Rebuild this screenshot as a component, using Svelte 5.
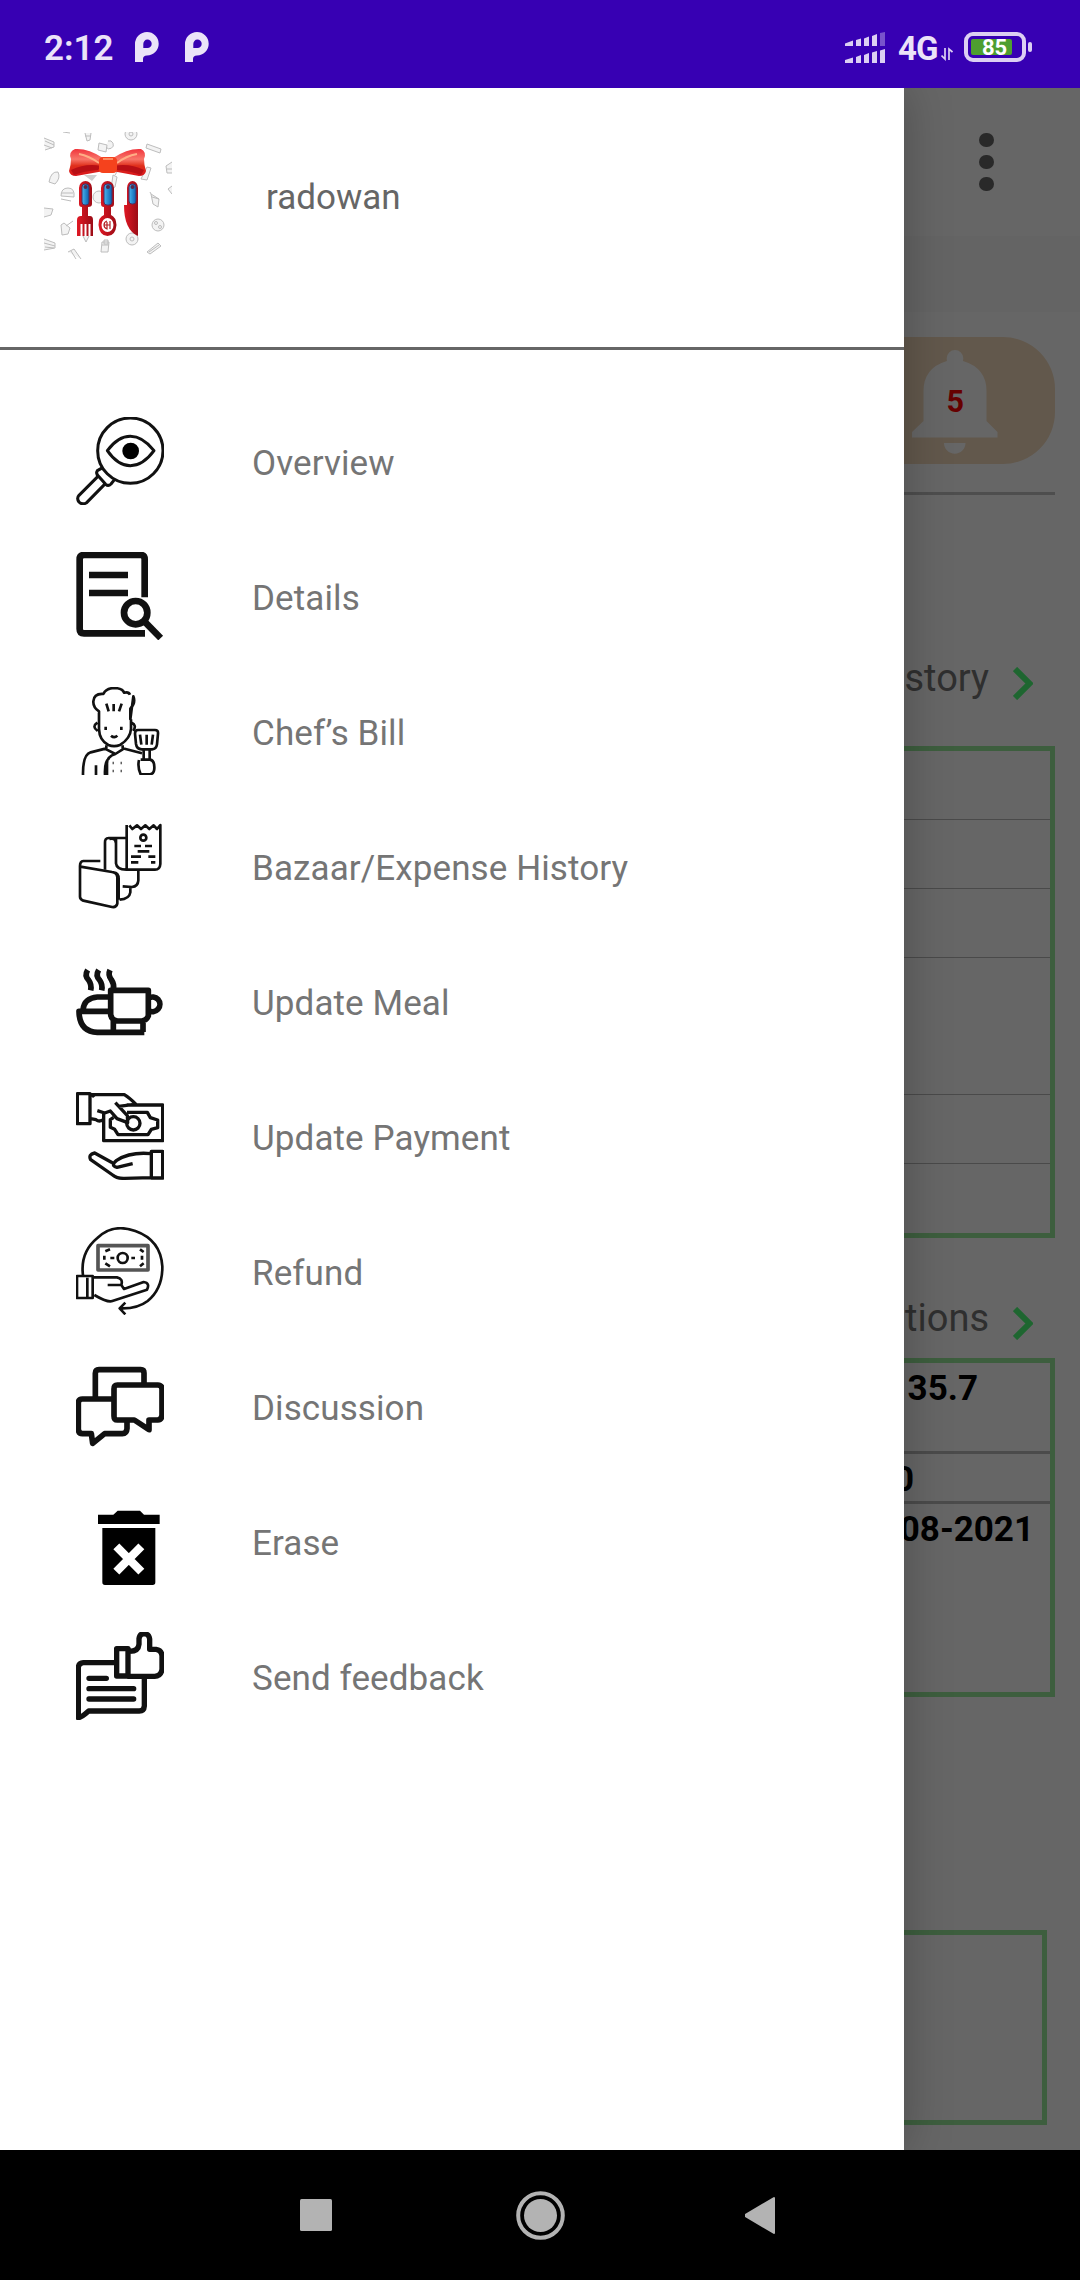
<script>
  const items = [
    { id: 'overview', label: 'Overview', top: 51 },
    { id: 'details', label: 'Details', top: 456 },
    { id: 'chef', label: 'Chef’s Bill', top: 51 },
    { id: 'bazaar', label: 'Bazaar/Expense History', top: 456 },
    { id: 'meal', label: 'Update Meal', top: 51 },
    { id: 'payment', label: 'Update Payment', top: 456 },
    { id: 'refund', label: 'Refund', top: 51 },
    { id: 'discussion', label: 'Discussion', top: 456 },
    { id: 'erase', label: 'Erase', top: 51 },
    { id: 'feedback', label: 'Send feedback', top: 456 }
  ];
</script>

<div class="screen">
  <header class="status">
    <span class="time">2:12</span>
    {#each [0, 1] as n (n)}
      <svg class="pee" viewBox="0 0 24 30"><path fill-rule="evenodd" d="M0 30V12A12 12 0 0 1 12 0A11.700 11.700 0 0 1 12 23.400Q8 23.500 8 27V30zM8.300 16V12a4.200 4.200 0 1 1 4.200 4z" fill="#ebe3f8" /></svg>
    {/each}
    <svg class="signal" viewBox="0 0 40 32">
      <g fill="#dccff3">
        <path d="M0 11.500L8 8.500V14H0zM11 8L16 6.500V14H11zM19 6.500L24 4.500V14H19zM27 4L32 2V14H27z" />
        <path d="M0 28L8 25.500V31H0zM11 25L16 23V31H11zM19 23L24 21V31H19zM27 20.500L32 19V31H27zM35 18.500L40 17V31H35z" />
        <path d="M35 1L40 0V14H35z" opacity=".4" />
      </g>
    </svg>
    <span class="net">4G</span>
    <svg class="updown" viewBox="0 0 12 14"><path d="M4 1V12L.5 8.500M8 13V2L11.500 5" fill="none" stroke="#dccff3" stroke-width="1.700" /></svg>
    <div class="battery"><div class="level"></div><b>85</b></div>
    <i class="nub"></i>
  </header>

  <main>
    <div class="page">
      <div class="toolbar"><i></i><i></i><i></i></div>
      <div class="band"></div>
      <div class="pill">
        <svg viewBox="0 0 86 104">
          <path d="M34.700 8.300A8.300 8.300 0 0 1 51.300 8.300L51 11Q74.500 18 74.500 41V71L85.500 82V87.500H0V82L11.500 71V41Q11.500 18 34.900 11zM32 93H53.500A10.700 10.700 0 0 1 32 93z" fill="#fff" />
        </svg>
        <b>5</b>
      </div>
      <div class="rule"></div>
      <div class="heading first"><span>story</span><svg viewBox="0 0 20 33"><path d="M2 2L16.500 16.500L2 31" /></svg></div>
      <div class="table">
        <p></p><p></p><p></p><p class="tall"></p><p></p><p class="last"></p>
      </div>
      <div class="heading second"><span>tions</span><svg viewBox="0 0 20 33"><path d="M2 2L16.500 16.500L2 31" /></svg></div>
      <div class="stats">
        <b class="a">35.7</b>
        <b class="b">0</b>
        <b class="c">08-2021</b>
      </div>
      <div class="box"></div>
    </div>
    <div class="scrim"></div>

    <aside class="drawer">
      <div class="profile">
        <svg class="logo" viewBox="0 0 128 127">
          <defs>
            <linearGradient id="bow" x1="0" y1="0" x2="0" y2="1"><stop offset="0" stop-color="#f0343c" /><stop offset=".38" stop-color="#f8766a" /><stop offset=".62" stop-color="#e0301c" /><stop offset="1" stop-color="#d8141c" /></linearGradient>
            <linearGradient id="steel" x1="0" x2="1"><stop offset="0" stop-color="#e01824" /><stop offset="1" stop-color="#9c0c16" /></linearGradient>
            <linearGradient id="grip" x1="0" x2="1"><stop offset="0" stop-color="#49b4ee" /><stop offset="1" stop-color="#0b5fae" /></linearGradient>
          </defs>
          <g fill="#f3f3f3" stroke="#bdbdbd" stroke-width="1">
            <path d="M0 6l10 4v5l-9 3M1 9l9 4M0 13l8 3M19 0l7 1M41 1l2 8 3-1 1-7M41 4h6M55 11l8 2-1 7-8-2zM64 9a4 4 0 1 1-2 6M103 12l14 5-1 4-14-5zM5 50q2-11 9-10 3 6-3 12zM17 64q0-8 7-8 7 0 6 9zM17 61h12M17 67l10 2M107 62l2 10 5 3 1-8zM108 65l7 2M107 62l-1-2M0 76l9 1-2 6-7 2M17 93l3-2 6 5-2 6-6 1zM22 94l7-5M0 107l11 4v5l-11 2M0 111l11 3M1 115l9 1M24 120l6-3 7 10M27 119l5 8M58 110h7l-1 10h-7zM58 113h7M60 108h4v4h-4zM103 120l11-9 3 3-11 8zM105 120l10-7M39 104l3 6 3-6M128 30l-6 4 1 7h5M123 37h5M128 54l-4 3 4 5M69 43l4 2-2 10-4 2zM71 43l2-3M97 47l6 1 4-12-4-1z" />
            <circle cx="87" cy="2" r="6" /><circle cx="87" cy="2" r="2" /><circle cx="114" cy="93" r="6" /><circle cx="112" cy="91" r="1.500" /><circle cx="116" cy="95" r="1.500" /><circle cx="88" cy="107" r="6" /><circle cx="88" cy="107" r="2" /><circle cx="55" cy="65" r="6" />
          </g>
          <path d="M40 43h13l-5 6z" fill="#cfcfcf" />
          <path d="M59 26Q44 16 31 17Q24 20 27 27Q27 33 25 39Q26 44 32 44L60 39zM69 26Q84 16 97 17Q103 20 100 27Q100 33 102 39Q101 44 95 44L68 39z" fill="url(#bow)" />
          <path d="M27 38Q42 31 57 34L54 38Q40 39 30 43zM100 38Q85 31 70 34L73 38Q87 39 97 43z" fill="#b80f15" />
          <path d="M35 22Q45 24 55 31M93 22Q82 24 73 31" fill="none" stroke="#ffae85" stroke-width="2" />
          <rect x="55" y="25" width="18" height="16" rx="4" fill="#f5421d" />
          <path d="M59 27h10" stroke="#ff8a60" stroke-width="2" />
          <g fill="url(#steel)">
            <path d="M35 56a6.500 7 0 0 1 13 0V72q0 3-4 3v9h2q3 0 3 4v16h-2.500V92h-2v12h-2V92h-2v12h-2V92h-2v12H33V88q0-4 4-4h1v-9q-3 0-3-3z" />
            <path d="M57 56a6.500 7 0 0 1 13 0V72q0 3-3 3v8q5 2 5.500 10-1 11-9 11t-9-11q0-8 5.500-10v-8q-3 0-3-3z" />
            <path d="M83 56a5.500 7 0 0 1 11 0V104Q80 98 80 73h3z" />
          </g>
          <g fill="url(#grip)" stroke="#493266" stroke-width="1"><rect x="38" y="52" width="7" height="21" rx="3" /><rect x="60" y="52" width="8" height="21" rx="3" /><rect x="85" y="52" width="7" height="20" rx="3" /></g>
          <g fill="#5a2848"><circle cx="41.500" cy="55" r="2" /><circle cx="64" cy="55" r="2" /><circle cx="88.500" cy="55" r="2" /></g>
          <ellipse cx="63.500" cy="93" rx="6" ry="7" fill="#fff" />
          <path d="M63 89q-3 1-3 4t3 4v-7M66 97v-8M60 93h6" fill="none" stroke="#b32024" stroke-width="1.200" />
        </svg>
        <span>radowan</span>
      </div>
      <nav>
        {#each items as item (item.id)}
          <div class="item">
            <svg viewBox="48 {item.top} 264 264" class="icon {item.id}">
              {#if item.id === 'overview'}
                <circle cx="211" cy="152" r="98" />
                <path d="M142 152Q174 109 211 109T282 152Q249 197 211 197T142 152z" /><circle class="fill" cx="212" cy="153" r="25" />
                <path d="M128 203L112 212Q106 222 117 230L137 253Q145 260 153 252L164 238M116 227L57 286Q49 295 57 306Q67 316 80 308L136 251" />
              {:else if item.id === 'details'}
                <path d="M254 592V478Q254 465 242 465H72Q59 465 59 478V687Q59 700 72 700H255" />
                <path d="M87 525H204M87 579H204" />
                <circle cx="227" cy="638" r="35" /><path d="M253 664L302 714" />
              {:else if item.id === 'chef'}
                <path d="M117 148V124Q99 112 100 94Q102 70 130 72Q138 55 162 54Q188 55 192 68Q206 64 210 74M220 79Q228 98 211 116V148zM117 148V177Q118 211 145 225Q162 232 180 225Q211 206 213 177V148M112 158Q94 170 113 183M215 158Q231 165 220 183M139 101L146 124M161 102V124M185 101L177 124" />
                <path d="M137 170V180M184 170V180M153 197Q163 206 172 197M139 226V238L166 252L188 238V226M139 235L92 247Q68 254 69 315M188 235L246 250M166 252Q140 260 141 282V315M148 265Q133 272 135 315M108 286V315" />
                <path d="M158 279h3M182 279h3M158 303h3M182 303h3" />
                <path d="M234 180H285Q295 180 294 191L291 223Q289 237 276 238H245Q230 237 228 222L225 191Q225 180 234 180zM240 194L244 224M260 194V224M279 194L275 224M251 238V269M269 238V269M242 269H270Q283 271 283 291Q284 311 270 313H242Q232 292 237 270" />
              {:else if item.id === 'bazaar'}
                <path d="M200 465V599H285Q300 599 301 582V465L291 477L281 466L268 477L256 466L243 477L231 466L217 477L208 466M198 504H146Q134 504 135 519V599M168 504V580Q170 599 199 599M148 507Q166 502 168 520" />
                <path d="M121 573H70Q60 574 60 588V680Q60 688 70 692L156 711Q169 713 172 701V622Q171 608 156 606L61 590M160 607Q176 609 176 626V689M235 601V631Q234 649 216 651L188 649M211 650V667Q208 687 179 689" />
                <circle cx="250" cy="503" r="9" /><path d="M223 528H243M255 528H276M233 544H268M213 560H243M265 560H286M213 577H235M273 577H286" />
              {:else if item.id === 'meal'}
                <path d="M152 151H265V228Q259 242 245 243H173Q155 242 152 224zM265 175A22 22 0 1 1 265 211M160 243V276M249 243V276M253 277H112Q58 275 57 214H151M69 209Q73 174 112 171H151" />
                <path d="M83 90Q73 107 85 119Q96 134 92 151M116 90Q106 107 118 119Q129 134 125 151M150 90Q143 105 154 119Q164 134 160 149" />
              {:else if item.id === 'payment'}
                <path d="M52 461H90V551H52zM90 464H193Q208 473 228 493M90 464Q97 463 103 471M92 536L108 539Q119 548 132 537M112 512L134 519L151 513L171 536L203 548L202 527L166 488M176 499L217 494M131 520V602H308V495H200" />
                <path d="M201 517H262L271 533L293 540V563L274 568L264 584H174L164 568L151 562V539L161 532" />
                <circle cx="220" cy="550" r="20" />
                <path d="M274 634H308V714H274zM273 641Q211 635 170 661Q150 677 171 682L218 671M157 668L104 639Q84 643 92 659L158 705Q171 716 194 715L274 713" />
              {:else if item.id === 'refund'}
                <path d="M69 196Q60 127 112 84Q159 39 226 63Q302 90 307 169Q308 236 263 273Q232 297 180 295M196 278L179 295L196 313" />
                <path class="soft" d="M114 107H264V180H114z" /><path d="M136 124L150 118M240 118L251 126M136 160L150 169M240 169L251 160M133 137V149M246 137V149M151 144H163M214 144H225" /><circle cx="188" cy="144" r="15" />
                <path d="M51 198H98V264H51zM82 203V260M101 202H171Q190 206 184 225H143M184 225L192 237L251 216Q271 219 261 239L157 273Q144 279 103 255" />
              {:else if item.id === 'discussion'}
                <path d="M252 521V489Q252 479 242 479H117Q106 479 106 490V562" />
                <path d="M157 567H67Q56 567 55 578V658Q56 671 67 671H94L98 700L134 671H187Q200 671 201 656V632" />
                <path d="M172 525H293Q306 526 306 537V616Q305 629 293 630H267V659L223 630H172Q162 630 162 618V537Q162 525 172 525z" />
              {:else if item.id === 'erase'}
                <path d="M114 104H160L173 92H240L252 104H299V132H114zM127 144H286V307Q286 315 278 315H135Q127 315 127 307z" /><path class="cross" d="M169 199L244 275M244 199L169 275" />
              {:else}
                <path d="M164 548H70Q56 549 55 562V713Q62 714 86 693H238Q252 693 253 678V596M87 595H139M87 626H221M87 657H221" />
                <path d="M170 506H204V588H170zM204 514Q235 516 237 493V476Q239 461 252 461Q267 462 269 477V508H288Q306 511 306 529V568Q303 588 284 589H204" />
              {/if}
            </svg>
            <span>{item.label}</span>
          </div>
        {/each}
      </nav>
    </aside>
  </main>

  <footer>
    <svg viewBox="0 0 520 130">
      <g fill="#b3b3b3">
        <rect x="20" y="49" width="32" height="32" rx="1.500" />
        <circle cx="260.500" cy="65.500" r="16.500" /><circle cx="260.500" cy="65.500" r="22.300" fill="none" stroke="#b3b3b3" stroke-width="4" />
        <path d="M466 64.500L494 48V83L466 66.500z" stroke="#b3b3b3" stroke-width="2" stroke-linejoin="round" />
      </g>
    </svg>
  </footer>
</div>

<style>
  :global(body) { margin: 0; }
  .screen { width: 1080px; height: 2280px; display: flex; flex-direction: column; overflow: hidden; font-family: Roboto, "Liberation Sans", sans-serif; background: #000; }

  .status { height: 88px; background: #3700b3; color: #ebe3f8; display: flex; align-items: flex-start; box-sizing: border-box; padding: 32px 48px 0 44px; }
  .time { width: 91px; font-size: 35px; line-height: 34px; font-weight: 600; }
  .pee { width: 24px; height: 30px; margin-right: 26px; }
  .signal { width: 40px; height: 32px; margin-left: auto; }
  .net { width: 43px; margin-left: 13px; font-size: 33px; line-height: 33px; font-weight: 700; letter-spacing: -1px; }
  .updown { width: 12px; height: 14px; margin: 15px 11px 0 0; }
  .battery { width: 62px; height: 30px; box-sizing: border-box; border: 4px solid #dccff3; border-radius: 9px; padding: 3px; display: grid; }
  .level { grid-area: 1/1; width: 41px; height: 16px; border-radius: 2px; background: #4e9e30; }
  .battery b { grid-area: 1/1; font-size: 22px; line-height: 17px; font-weight: 700; padding-left: 11px; color: #fff; }
  .nub { width: 4px; height: 10px; margin: 10px 0 0 2px; border-radius: 2px; background: #dccff3; }

  main { position: relative; height: 2062px; overflow: hidden; background: #fff; }
  .page { height: 2062px; display: flex; flex-direction: column; align-items: flex-end; box-sizing: border-box; padding-right: 25px; }
  .toolbar { height: 148px; width: 76px; display: flex; flex-direction: column; align-items: flex-start; gap: 7.400px; box-sizing: border-box; padding-top: 44.700px; }
  .toolbar i { width: 14.600px; height: 14.600px; border-radius: 50%; background: #666; }
  .band { width: 1080px; height: 76px; margin-right: -25px; background: #fafafa; }
  .pill { width: 500px; height: 127px; margin-top: 25px; border-radius: 52px; background: #f5dcbe; display: grid; justify-items: end; }
  .pill svg { grid-area: 1/1; width: 86px; height: 104px; margin: 13px 57px 0 0; }
  .pill b { grid-area: 1/1; margin: 44px 91px 0 0; font-size: 30.500px; line-height: 42px; color: #ff0000; font-weight: 700; }
  .rule { width: 700px; height: 3px; margin-top: 28px; background: #c4c4c4; }
  .heading { display: flex; align-items: flex-start; font-size: 38px; line-height: 51px; color: #757575; height: 50px; }
  .heading svg { width: 20px; height: 33px; margin: 14px 22px 0 24px; }
  .heading path { fill: none; stroke: #4cff78; stroke-width: 6; }
  .first { margin-top: 158px; }
  .table { width: 700px; box-sizing: border-box; height: 492px; margin-top: 43px; border: 5px solid #98ea9b; }
  .table p { margin: 0; height: 69px; box-sizing: border-box; border-bottom: 1px solid #b8b8b8; }
  .table .tall { height: 137px; }
  .table .last { border: 0; }
  .second { margin-top: 55px; }
  .stats { width: 700px; box-sizing: border-box; height: 339px; margin-top: 15px; border: 5px solid #98ea9b; display: flex; flex-direction: column; text-align: right; font-size: 35px; line-height: 42px; color: #000; }
  .stats b { font-weight: 700; box-sizing: border-box; }
  .a { height: 91px; padding: 5px 72px 0 0; border-bottom: 3px solid #bbb; }
  .b { height: 50px; padding: 5px 136px 0 0; border-bottom: 3px solid #bbb; }
  .c { padding: 5px 16px 0 0; }
  .box { width: 700px; box-sizing: border-box; height: 195px; margin: 233px 8px 0 0; border: 5px solid #98ea9b; }
  .scrim { position: absolute; inset: 0; background: rgba(0, 0, 0, .6); }

  .drawer { position: absolute; top: 0; left: 0; width: 904px; height: 2062px; background: #fff; box-shadow: 0 0 44px rgba(0, 0, 0, .25); }
  .profile { height: 262px; box-sizing: border-box; border-bottom: 3px solid #666; display: flex; padding: 44px 0 0 44px; }
  .logo { width: 128px; height: 127px; }
  .profile span { margin: 45px 0 0 94px; font-size: 35px; line-height: 42px; color: #666; }
  nav { padding-top: 43px; }
  .item { height: 135px; display: flex; box-sizing: border-box; padding: 24px 0 0 76px; }
  .item span { margin-left: 88px; font-size: 35px; line-height: 93px; color: #757575; letter-spacing: .1px; white-space: nowrap; }
  .icon { width: 88px; height: 88px; fill: none; stroke: #111; stroke-width: 9; stroke-linejoin: round; }
  .icon .fill { fill: #000; stroke: none; }
  .details { stroke-width: 20; }
  .chef { stroke-width: 8; }
  .bazaar { stroke-width: 8; }
  .meal { stroke-width: 17; }
  .payment { stroke-width: 10; }
  .refund { stroke-width: 8; }
  .refund .soft { stroke: #555; stroke-width: 11; }
  .discussion { stroke-width: 17; }
  .feedback { stroke-width: 16; stroke-linecap: round; }
  .erase { fill: #000; stroke: none; }
  .erase .cross { stroke: #fff; stroke-width: 25; }

  footer { height: 130px; background: #000; display: flex; justify-content: center; }
  footer svg { width: 520px; height: 130px; }
</style>
